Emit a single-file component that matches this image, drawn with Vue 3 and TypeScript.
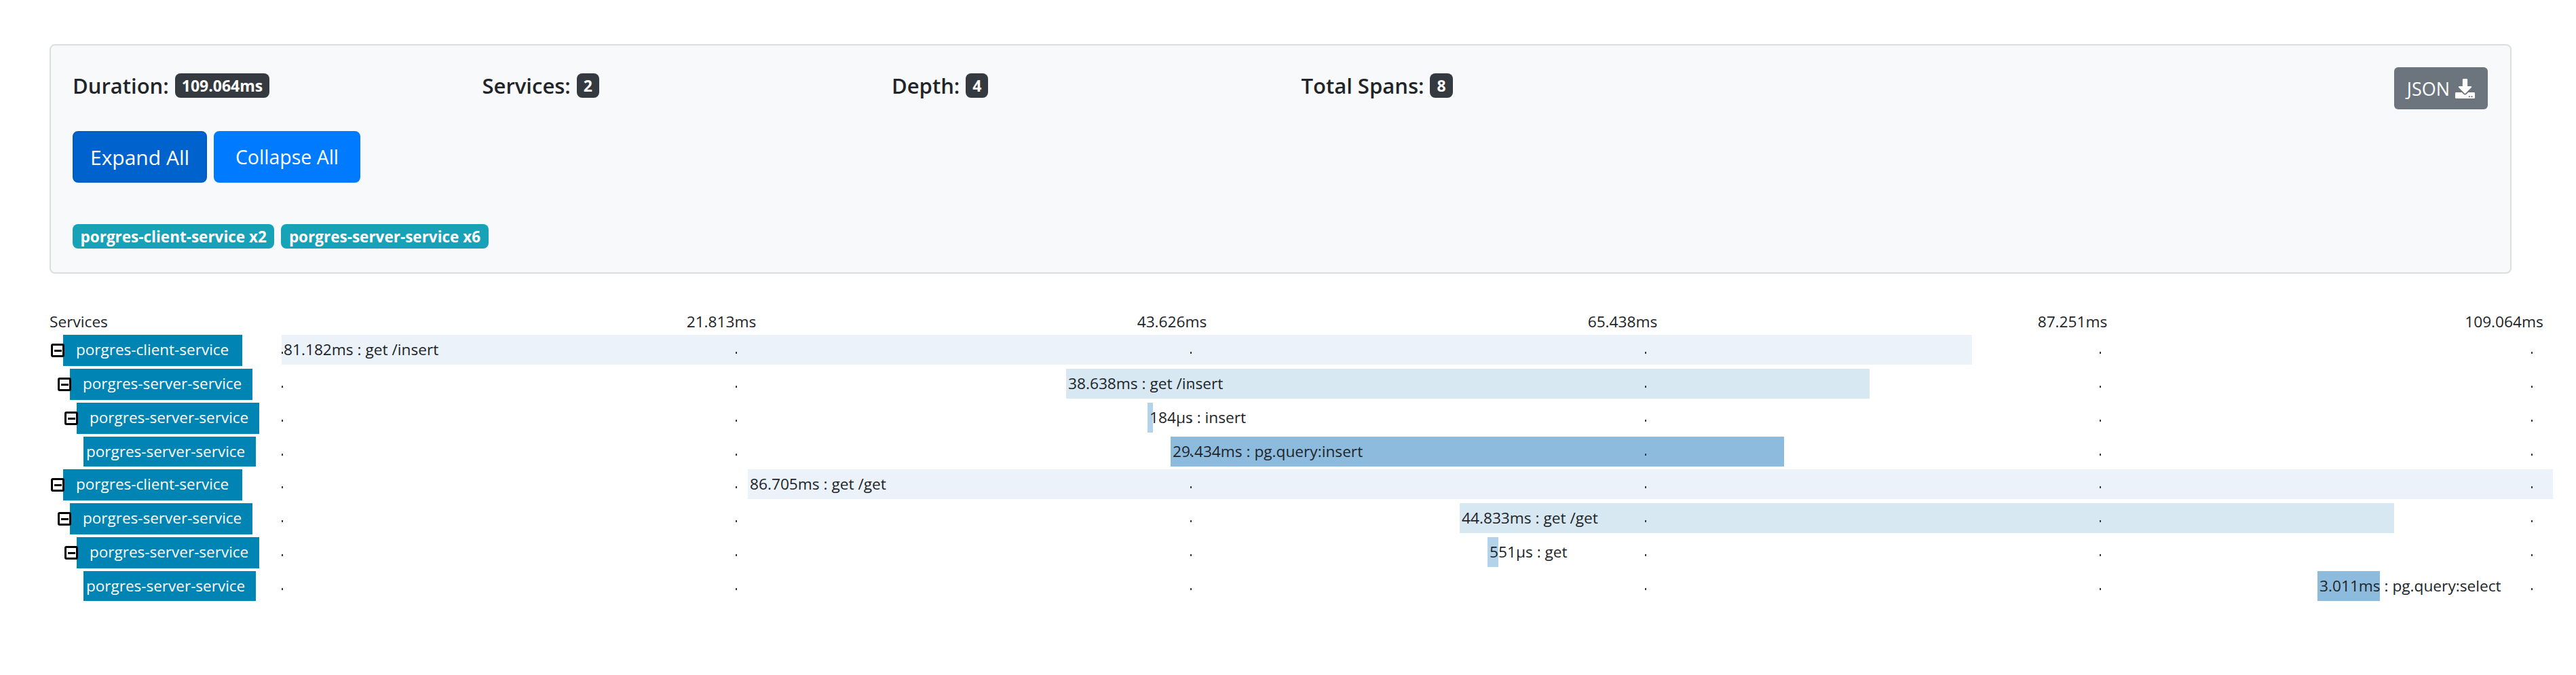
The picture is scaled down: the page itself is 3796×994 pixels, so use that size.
<script setup lang="ts">
// Trace timeline view: summary card on top, span rows with a service label and a time bar.

interface Span {
  service: string
  depth: number
  leaf: boolean
  left: number
  width: number
  color: string
  label: string
}

const stats = [
  { name: 'Duration:', value: '109.064ms' },
  { name: 'Services:', value: '2' },
  { name: 'Depth:', value: '4' },
  { name: 'Total Spans:', value: '8' },
]

const tags = ['porgres-client-service x2', 'porgres-server-service x6']

// x positions are measured from the start of the timeline column
const axis = [
  { text: '21.813ms', x: 648 },
  { text: '43.626ms', x: 1312 },
  { text: '65.438ms', x: 1976 },
  { text: '87.251ms', x: 2639 },
  { text: '109.064ms', x: 3275 },
]
const ticks = [0, 669, 1339, 2009, 2679, 3315]

const C1 = '#ebf2f9'
const C2 = '#d8e8f3'
const C3 = '#b3d3ea'
const C4 = '#8dbbdd'

const spans: Span[] = [
  { service: 'porgres-client-service', depth: 0, leaf: false, left: 0, width: 2491, color: C1, label: '81.182ms : get /insert' },
  { service: 'porgres-server-service', depth: 1, leaf: false, left: 1156, width: 1184, color: C2, label: '38.638ms : get /insert' },
  { service: 'porgres-server-service', depth: 2, leaf: false, left: 1276, width: 8, color: C3, label: '184µs : insert' },
  { service: 'porgres-server-service', depth: 3, leaf: true, left: 1310, width: 904, color: C4, label: '29.434ms : pg.query:insert' },
  { service: 'porgres-client-service', depth: 0, leaf: false, left: 687, width: 2660, color: C1, label: '86.705ms : get /get' },
  { service: 'porgres-server-service', depth: 1, leaf: false, left: 1736, width: 1377, color: C2, label: '44.833ms : get /get' },
  { service: 'porgres-server-service', depth: 2, leaf: false, left: 1777, width: 16, color: C3, label: '551µs : get' },
  { service: 'porgres-server-service', depth: 3, leaf: true, left: 3000, width: 92, color: C4, label: '3.011ms : pg.query:select' },
]
</script>

<template>
  <div class="page">
    <section class="summary">
      <div class="stats">
        <div v-for="s in stats" :key="s.name" class="stat">
          <span class="stat-name">{{ s.name }}</span>
          <span class="badge dark">{{ s.value }}</span>
        </div>
        <button class="btn-json">
          JSON
          <svg class="dl" viewBox="0 0 512 512" aria-hidden="true">
            <path
              fill="currentColor"
              d="M216 0h80c13.3 0 24 10.7 24 24v168h87.7c17.8 0 26.7 21.5 14.1 34.1L269.7 378.3c-7.5 7.5-19.8 7.5-27.3 0L90.1 226.1c-12.6-12.6-3.7-34.1 14.1-34.1H192V24c0-13.3 10.7-24 24-24zm296 376v112c0 13.3-10.7 24-24 24H24c-13.3 0-24-10.7-24-24V376c0-13.3 10.7-24 24-24h146.7l49 49c20.1 20.1 52.5 20.1 72.6 0l49-49H488c13.3 0 24 10.7 24 24zm-124 88c0-11-9-20-20-20s-20 9-20 20 9 20 20 20 20-9 20-20zm64 0c0-11-9-20-20-20s-20 9-20 20 9 20 20 20 20-9 20-20z"
            />
          </svg>
        </button>
      </div>

      <div class="actions">
        <button class="btn expand">Expand All</button>
        <button class="btn collapse">Collapse All</button>
      </div>

      <div class="tags">
        <span v-for="t in tags" :key="t" class="badge info">{{ t }}</span>
      </div>
    </section>

    <section class="trace">
      <div class="trace-head">
        <div class="head-name">Services</div>
        <div class="axis">
          <span v-for="a in axis" :key="a.text" class="axis-label" :style="{ left: a.x + 'px' }">{{ a.text }}</span>
        </div>
      </div>

      <div v-for="(s, i) in spans" :key="i" class="row" :class="{ leaf: s.leaf }">
        <div class="name-col">
          <div class="name" :class="{ leaf: s.leaf }" :style="{ marginLeft: 20 + s.depth * 10 + 'px' }">
            <span v-if="!s.leaf" class="toggle"><i /></span>
            {{ s.service }}
          </div>
        </div>
        <div class="timeline">
          <div class="bar" :style="{ left: s.left + 'px', width: s.width + 'px', background: s.color }" />
          <span class="bar-text" :style="{ left: s.left + 3 + 'px' }">{{ s.label }}</span>
          <i v-for="t in ticks" :key="t" class="tick" :style="{ left: t + 'px' }" />
        </div>
      </div>
    </section>
  </div>
</template>

<style scoped>
.page {
  width: 3796px;
  box-sizing: border-box;
  padding: 65px 0 0 73px;
  font-family: "Open Sans", "Liberation Sans", sans-serif;
  color: #212529;
}

.summary {
  width: 3628px;
  box-sizing: border-box;
  background: #f8f9fa;
  border: 2px solid #dcdee0;
  border-radius: 8px;
  padding: 32px 33px 35px 32px;
}

.stats {
  display: flex;
  height: 62px;
}

.stat {
  width: 603.5px;
  height: 36px;
  margin-top: 9px;
  display: flex;
  align-items: center;
  gap: 9px;
}

.stat-name {
  font-size: 31px;
  font-weight: 600;
  line-height: 36px;
}

.badge {
  display: inline-flex;
  align-items: center;
  height: 36px;
  padding: 0 10px;
  border-radius: 8px;
  color: #fff;
  font-size: 23px;
  font-weight: 700;
  white-space: nowrap;
}

.badge.dark {
  background: #343a40;
}

.badge.info {
  padding: 0 11.5px;
  font-size: 22.5px;
  background: #17a2b8;
}

.btn-json {
  margin-left: auto;
  height: 62px;
  width: 138px;
  padding: 0;
  border: 0;
  border-radius: 6px;
  background: #6c757d;
  color: #fff;
  font-family: inherit;
  font-size: 27px;
  display: flex;
  align-items: center;
  justify-content: center;
  gap: 8px;
}

.dl {
  width: 29px;
  height: 29px;
}

.actions {
  display: flex;
  gap: 10px;
  margin-top: 32px;
}

.btn {
  height: 76px;
  padding: 0;
  border-radius: 8px;
  color: #fff;
  font-family: inherit;
  white-space: nowrap;
}

.expand {
  width: 198px;
  font-size: 30px;
  background: #0062cc;
  border: 2px solid #005cbf;
}

.collapse {
  width: 216px;
  font-size: 28.5px;
  background: #007bff;
  border: 2px solid #007bff;
}

.tags {
  display: flex;
  gap: 10px;
  margin-top: 61px;
}

.trace {
  margin-top: 56px;
  display: flex;
  flex-direction: column;
  gap: 4px;
}

.trace-head {
  display: flex;
  height: 30px;
  font-size: 22.7px;
  line-height: 30px;
}

.head-name {
  width: 342px;
}

.axis {
  position: relative;
  flex: 1;
}

.axis-label {
  position: absolute;
  top: 0;
  transform: translateX(-50%);
  white-space: nowrap;
}

.row {
  display: flex;
  height: 46px;
}

.row.leaf {
  height: 44px;
}

.name-col {
  width: 342px;
  flex: none;
}

.name {
  position: relative;
  display: inline-block;
  box-sizing: border-box;
  min-width: 264px;
  height: 46px;
  line-height: 44px;
  padding: 0 16px 0 19px;
  background: #0084b4;
  color: #fff;
  font-size: 22.5px;
  white-space: nowrap;
}

.name.leaf {
  min-width: 0;
  height: 44px;
  padding: 0 16px 0 4px;
}

.toggle {
  position: absolute;
  left: -18px;
  top: 13px;
  width: 20px;
  height: 20px;
  box-sizing: border-box;
  border: 3px solid #000;
  border-radius: 3px;
  background: #fff;
  display: flex;
  align-items: center;
  justify-content: center;
}

.toggle i {
  display: block;
  width: 11px;
  height: 3px;
  background: #000;
}

.timeline {
  position: relative;
  flex: 1;
  height: 44px;
}

.bar {
  position: absolute;
  top: 0;
  bottom: 0;
}

.bar-text {
  position: absolute;
  top: 0;
  font-size: 22.7px;
  line-height: 44px;
  white-space: nowrap;
}

.tick {
  position: absolute;
  top: 25px;
  width: 2px;
  height: 3px;
  background: #343a40;
}
</style>
